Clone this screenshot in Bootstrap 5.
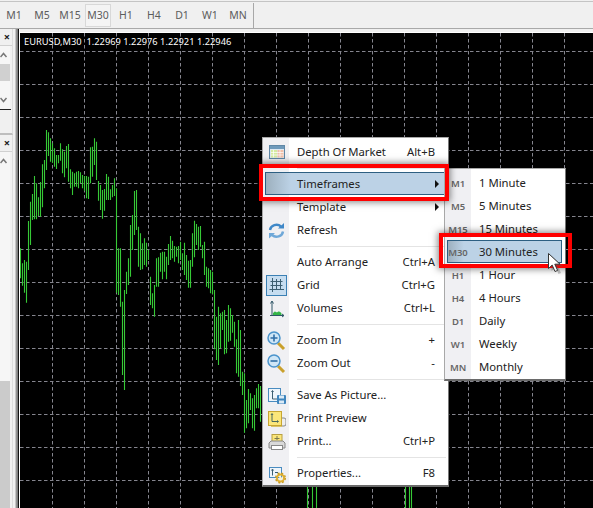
<!DOCTYPE html>
<html lang="en">
<head>
<meta charset="utf-8">
<title>MetaTrader chart timeframes</title>
<link href="https://cdn.jsdelivr.net/npm/bootstrap@5.3.0/dist/css/bootstrap.min.css" rel="stylesheet">
<style>
html,body{margin:0;height:100%;overflow:hidden;background:#f0f0f0}
body{font-family:"Noto Sans","Open Sans",sans-serif;font-size:11.3px;color:#222}
.mt-app{width:593px;height:508px;position:relative;overflow:hidden}
.mt-top{height:28px;background:#f0f0f0;border-top:1px solid #c4c4c4;border-bottom:1px solid #a9a9a9;margin-top:1px;padding-top:2px}
.mt-tf{width:28px;height:23px;padding:0;border:1px solid transparent;border-radius:0;font-size:10.5px;line-height:21px;color:#5c5c5c;background:transparent;text-align:center}
.mt-tf.active{border-color:#d8d8d8;background:#f4f4f4;color:#5c5c5c;width:26px;margin:0 1px}
.mt-tsep{width:1px;height:25px;background:#a8a8a8;margin-left:1px;margin-top:-1px}
.mt-main{height:479px;padding-top:3px}
.mt-side{width:20px;flex:none;margin-top:-3px;background:linear-gradient(to right,#f0f0f0 15px,#9a9a9a 16px,#777 18px,#111 18px,#111 19px,#fff 19px)}
.mt-sect{width:13px;border-right:1px solid #dcdcdc;color:#444}
.mt-s1{height:106px;border-bottom:2px solid #bdbdbd}
.mt-s2{height:373px}
.mt-head{height:17px;font-size:11px;font-weight:700;line-height:16px;text-align:right;padding-right:2px;border-bottom:1px solid #d0d0d0;color:#222}
.mt-scroll{width:10px;background:#f6f6f6}
.mt-s1 .mt-scroll{height:63px}
.mt-s2 .mt-scroll{height:356px}
.mt-chev{height:18px;display:block}
.mt-chev-low{height:10px}
.mt-thumb1{height:17px;background:#d0d0d0}
.mt-gap{height:14px}
.mt-rule{height:1px;width:11px;background:#222}
.mt-thumb2{height:127px;background:#cbcbcb}
.mt-chart{flex:1 1 auto;background:#000;border-top:1px solid #fff;position:relative;overflow:hidden}
.mt-chart svg{display:block}
.mt-cap{position:absolute;left:4px;top:2px;color:#fff;font-size:9.3px;line-height:13px;white-space:pre}
.mt-menu{display:block;position:absolute;border-radius:0;margin:0;padding:3px 0 0;min-width:0;font-size:11.3px;color:#222;border:1px solid #a8a8a8;border-right-color:#777;border-bottom:2px solid #6a6a6a}
.mt-m1{left:262px;top:137px;width:187px;background:linear-gradient(to right,#f0f0f3 26px,#fff 26px);z-index:10}
.mt-m2{left:444px;top:168px;width:122px;background:linear-gradient(to right,#f0f0f3 26px,#fff 26px);z-index:11}
.mt-row{height:23px;padding:0 13px 0 0;color:#222;position:relative;white-space:nowrap;line-height:22px}
.mt-row:hover{background:transparent;color:#222}
.mt-ico{width:26px;flex:none;margin-right:8px;display:flex;align-items:center;justify-content:center;height:23px;position:relative;z-index:1}
.mt-lab{position:relative;z-index:1}
.mt-key{position:relative;z-index:1}
.mt-tag{font-size:9.5px;font-weight:600;color:#666;letter-spacing:-.1px}
.mt-hi::before{content:"";position:absolute;top:-1px;bottom:1px;left:2px;right:3px;background:linear-gradient(to right,#9db0be,#bcd2e6 14%);border:1px solid #2d5f82}
.mt-arrow{width:0;height:0;align-self:center;border-left:4px solid #111;border-top:4px solid transparent;border-bottom:4px solid transparent;margin:-2px -4px 0 0;position:relative;z-index:1}
.mt-sep{height:9px;padding:4px 2px 4px 34px;margin:0}
.mt-sep i{display:block;height:1px;background:#e4e4e4}
.mt-sel{width:21px;height:21px;background:#c6ddf0;border:1px solid #3b80b4;display:flex;align-items:center;justify-content:center}
.mt-red{position:absolute;border:4px solid #f00;box-shadow:0 0 7px 1px rgba(0,0,0,.5);z-index:20;pointer-events:none}
.mt-r1{left:259px;top:164px;width:190px;height:37px}
.mt-r2{left:439px;top:233px;width:133px;height:35px}
.mt-cursor{position:absolute;left:546px;top:251px;z-index:30}
</style>
</head>
<body>
<div class="mt-app">
  <div class="mt-top d-flex">
    <button class="btn mt-tf">M1</button>
    <button class="btn mt-tf">M5</button>
    <button class="btn mt-tf">M15</button>
    <button class="btn mt-tf active">M30</button>
    <button class="btn mt-tf">H1</button>
    <button class="btn mt-tf">H4</button>
    <button class="btn mt-tf">D1</button>
    <button class="btn mt-tf">W1</button>
    <button class="btn mt-tf">MN</button>
    <div class="mt-tsep"></div>
  </div>
  <div class="mt-main d-flex">
    <div class="mt-side">
      <div class="mt-sect mt-s1">
        <div class="mt-head">×</div>
        <div class="mt-scroll">
          <svg class="mt-chev" width="10" height="18" viewBox="0 0 10 18"><path d="M.5 11 3.5 7.5 6.500 11" fill="none" stroke="#777" stroke-width="1.500"/></svg>
          <div class="mt-thumb1"></div>
          <div class="mt-gap"></div>
          <svg class="mt-chev mt-chev-low" width="10" height="10" viewBox="0 0 10 10"><path d="M.5 3 3.500 6.500 6.500 3" fill="none" stroke="#777" stroke-width="1.500"/></svg>
        </div>
        <div class="mt-rule"></div>
      </div>
      <div class="mt-sect mt-s2">
        <div class="mt-head">×</div>
        <div class="mt-scroll d-flex flex-column">
          <svg class="mt-chev flex-shrink-0" width="10" height="18" viewBox="0 0 10 18"><path d="M.5 11 3.500 7.500 6.500 11" fill="none" stroke="#777" stroke-width="1.500"/></svg>
          <div class="flex-grow-1"></div>
          <div class="mt-thumb2 flex-shrink-0"></div>
        </div>
      </div>
    </div>
    <div class="mt-chart">
      <svg width="573" height="475" viewBox="20 33 573 475" xmlns="http://www.w3.org/2000/svg">
        <path id="mtGrid" fill="none" stroke="#85858e" stroke-width="1" stroke-dasharray="3.500 2.500"/>
        <path id="mtBars" fill="none" stroke="#36c936" stroke-width="1.100"/>
      </svg>
      <div class="mt-cap">EURUSD,M30  1.22969 1.22976 1.22921 1.22946</div>
    </div>
  </div>

  <div class="dropdown-menu show mt-menu mt-m1">
    <a class="dropdown-item d-flex mt-row"><span class="mt-ico"><svg width="20" height="20" viewBox="0 0 20 20"><rect x="3.500" y="2.500" width="15" height="13" fill="#dfe9f2" stroke="#5f87a6"/><rect x="4" y="3" width="14" height="3" fill="#6f9abb"/><rect x="5" y="7" width="6" height="7.500" fill="#d6eba0"/><rect x="11.500" y="7" width="6" height="7.500" fill="#f2bfa8"/><path d="M5 9.500h12.500M5 12h12.500M7.500 7v7.500M14 7v7.500" stroke="#fff" stroke-width=".7"/></svg></span><span class="mt-lab flex-grow-1">Depth Of Market</span><span class="mt-key">Alt+B</span></a>
    <div class="mt-sep"><i></i></div>
    <a class="dropdown-item d-flex mt-row mt-hi"><span class="mt-ico"></span><span class="mt-lab flex-grow-1">Timeframes</span><span class="mt-arrow"></span></a>
    <a class="dropdown-item d-flex mt-row"><span class="mt-ico"></span><span class="mt-lab flex-grow-1">Template</span><span class="mt-arrow"></span></a>
    <a class="dropdown-item d-flex mt-row"><span class="mt-ico"><svg width="20" height="20" viewBox="0 0 20 20"><path d="M4 9A6.500 6 0 0 1 15 5.500" fill="none" stroke="#3f88c8" stroke-width="2.400"/><path d="M12 7.500h6V2z" fill="#3f88c8"/><path d="M17 10.500a6.500 6 0 0 1-11 3.500" fill="none" stroke="#6fa8d8" stroke-width="2.400"/><path d="M9 12H3v5.500z" fill="#6fa8d8"/></svg></span><span class="mt-lab flex-grow-1">Refresh</span></a>
    <div class="mt-sep"><i></i></div>
    <a class="dropdown-item d-flex mt-row"><span class="mt-ico"></span><span class="mt-lab flex-grow-1">Auto Arrange</span><span class="mt-key">Ctrl+A</span></a>
    <a class="dropdown-item d-flex mt-row"><span class="mt-ico"><span class="mt-sel"><svg width="17" height="17" viewBox="0 0 17 17"><path d="M4.500 1v14M8.500 2v11M12.500 2v11M1.500 12.500H16M2.500 8.500h12M2.500 4.500h12" fill="none" stroke="#3c5f72" stroke-width="1"/></svg></span></span><span class="mt-lab flex-grow-1">Grid</span><span class="mt-key">Ctrl+G</span></a>
    <a class="dropdown-item d-flex mt-row"><span class="mt-ico"><svg width="20" height="20" viewBox="0 0 20 20"><path d="M7 16v-2c1.500-1.500 2-2 3-1 1 .8 2-.8 3-.500 1 .3 2 1 2.500 2V16z" fill="#35b548"/><path d="M6 2.500v14M4 16.500h14M4.500 4.500 6 2l1.500 2.500M16 15l2 1.500-2 1.500" fill="none" stroke="#2f5566" stroke-width="1"/></svg></span><span class="mt-lab flex-grow-1">Volumes</span><span class="mt-key">Ctrl+L</span></a>
    <div class="mt-sep"><i></i></div>
    <a class="dropdown-item d-flex mt-row"><span class="mt-ico"><svg width="20" height="20" viewBox="0 0 20 20"><path d="M12 12l6 6" stroke="#c9a02c" stroke-width="3"/><circle cx="8" cy="7" r="6" fill="#cfe6f6" stroke="#4b94cc" stroke-width="1.500"/><path d="M4.500 7h7M8 3.500v7" stroke="#2f6ea6" stroke-width="1.600"/></svg></span><span class="mt-lab flex-grow-1">Zoom In</span><span class="mt-key">+</span></a>
    <a class="dropdown-item d-flex mt-row"><span class="mt-ico"><svg width="20" height="20" viewBox="0 0 20 20"><path d="M12 12l6 6" stroke="#c9a02c" stroke-width="3"/><circle cx="8" cy="7" r="6" fill="#cfe6f6" stroke="#4b94cc" stroke-width="1.500"/><path d="M4.500 7h7" stroke="#2f6ea6" stroke-width="1.600"/></svg></span><span class="mt-lab flex-grow-1">Zoom Out</span><span class="mt-key">-</span></a>
    <div class="mt-sep"><i></i></div>
    <a class="dropdown-item d-flex mt-row"><span class="mt-ico"><svg width="20" height="20" viewBox="0 0 20 20"><rect x="2.500" y="2.500" width="12" height="13" fill="#eef5fb" stroke="#4a8cc0"/><path d="M6.500 5v8h5M5.500 6l1-1.500 1 1.500" fill="none" stroke="#3c5f72"/><rect x="11" y="9" width="9" height="9" rx="1" fill="#3f85bd"/><rect x="13" y="9.500" width="5" height="3" fill="#dbeaf6"/><rect x="13" y="14.500" width="5" height="3" fill="#dbeaf6"/></svg></span><span class="mt-lab flex-grow-1">Save As Picture...</span></a>
    <a class="dropdown-item d-flex mt-row"><span class="mt-ico"><svg width="20" height="20" viewBox="0 0 20 20"><rect x="13" y="9" width="7" height="8" rx="2" fill="#eee" stroke="#888"/><rect x="2.500" y="2.500" width="13" height="14" fill="#fbe67a" stroke="#c8a632"/><path d="M5 17.500h11" stroke="#d8c36a"/><path d="M6 5v7.500h6M5 6l1-1.500 1 1.500M11 11.500l1.500 1-1.500 1" fill="none" stroke="#4a6a60"/></svg></span><span class="mt-lab flex-grow-1">Print Preview</span></a>
    <a class="dropdown-item d-flex mt-row"><span class="mt-ico"><svg width="20" height="20" viewBox="0 0 20 20"><rect x="6" y="2.500" width="10" height="7" fill="#fbe67a" stroke="#b8a042"/><path d="M11 4v4M8.500 6.500h5" stroke="#7a7a50"/><path d="M5 9h12l2 2v5H3v-5z" fill="#d9d9d9" stroke="#888"/><rect x="5.500" y="13.500" width="11" height="4" fill="#fff" stroke="#888"/></svg></span><span class="mt-lab flex-grow-1">Print...</span><span class="mt-key">Ctrl+P</span></a>
    <div class="mt-sep"><i></i></div>
    <a class="dropdown-item d-flex mt-row"><span class="mt-ico"><svg width="20" height="20" viewBox="0 0 20 20"><rect x="3.500" y="3.500" width="12" height="10" fill="#eef5fb" stroke="#4a8cc0"/><path d="M6.500 5.500v6M5.500 6.500l1-1.500 1 1.500M9 8.500h3" fill="none" stroke="#3c5f72"/><circle cx="14.500" cy="14" r="3.500" fill="none" stroke="#e0b030" stroke-width="2" /><circle cx="14.500" cy="14" r="4.800" fill="none" stroke="#c99c22" stroke-width="1.400" stroke-dasharray="2 1.800"/><circle cx="14.500" cy="14" r="1.300" fill="#fff3c4"/></svg></span><span class="mt-lab flex-grow-1">Properties...</span><span class="mt-key">F8</span></a>
  </div>

  <div class="dropdown-menu show mt-menu mt-m2">
    <a class="dropdown-item d-flex mt-row"><span class="mt-ico mt-tag">M1</span><span class="mt-lab">1 Minute</span></a>
    <a class="dropdown-item d-flex mt-row"><span class="mt-ico mt-tag">M5</span><span class="mt-lab">5 Minutes</span></a>
    <a class="dropdown-item d-flex mt-row"><span class="mt-ico mt-tag">M15</span><span class="mt-lab">15 Minutes</span></a>
    <a class="dropdown-item d-flex mt-row mt-hi"><span class="mt-ico mt-tag">M30</span><span class="mt-lab">30 Minutes</span></a>
    <a class="dropdown-item d-flex mt-row"><span class="mt-ico mt-tag">H1</span><span class="mt-lab">1 Hour</span></a>
    <a class="dropdown-item d-flex mt-row"><span class="mt-ico mt-tag">H4</span><span class="mt-lab">4 Hours</span></a>
    <a class="dropdown-item d-flex mt-row"><span class="mt-ico mt-tag">D1</span><span class="mt-lab">Daily</span></a>
    <a class="dropdown-item d-flex mt-row"><span class="mt-ico mt-tag">W1</span><span class="mt-lab">Weekly</span></a>
    <a class="dropdown-item d-flex mt-row"><span class="mt-ico mt-tag">MN</span><span class="mt-lab">Monthly</span></a>
  </div>

  <div class="mt-red mt-r1"></div>
  <div class="mt-red mt-r2"></div>
  <svg class="mt-cursor" width="18" height="24" viewBox="0 0 18 24"><path d="M4 4v15l4-3.500 3 6.500 2.500-1-3-6.500h5.500z" fill="#555" opacity=".35" transform="translate(1.500 1)"/><path d="M2.500 2.500v15l3.700-3.400 2.800 6.400 2.600-1.100-2.800-6.200h5.200z" fill="#fff" stroke="#333" stroke-width="1"/></svg>
</div>
<script>
(function(){
  var g='';
  for(var x=52;x<593;x+=32){g+='M'+(x+.5)+' 33V508';}
  for(var y=51;y<508;y+=33){g+='M20 '+(y+.5)+'H593';}
  document.getElementById('mtGrid').setAttribute('d',g);
  /* high/low of each bar, in tripled chart coordinates from y=120 */
  var v=[385,475,430,497,420,518,425,548,303,450,245,375,222,300,168,298,190,298,232,288,186,290,133,262,120,205,30,150,37,108,55,125,70,128,85,140,105,147,105,130,70,122,88,160,95,172,78,145,72,185,148,205,155,225,160,200,155,200,153,205,157,190,165,205,168,212,168,235,170,237,82,190,80,170,55,135,65,180,183,242,195,270,210,296,207,272,162,240,170,240,208,240,195,232,175,228,205,518,385,525,385,560,545,765,510,810,455,522,415,495,315,470,285,390,213,345,210,330,320,440,340,450,370,448,355,435,368,440,390,420,470,555,520,565,495,590,415,500,412,500,398,455,395,478,395,455,410,478,372,435,348,420,362,415,378,425,380,410,378,430,365,420,400,450,368,465,405,480,422,503,420,503,340,440,302,412,312,375,320,390,318,380,375,415,365,465,440,500,445,505,450,520,455,522,510,688,590,720,560,735,580,685,575,630,570,703,600,700,555,665,565,662,585,638,605,680,658,760,600,770,630,798,755,825,760,938,840,925,807,910,820,870,835,925,825,932,805,865,792,865,798,905];
  var d='';
  for(var i=0;i<v.length;i+=2){
    var x=20.5+i;
    d+='M'+x+' '+(120+v[i]/3).toFixed(1)+'V'+(120+v[i+1]/3).toFixed(1);
  }
  [307,312,316,405,409,411].forEach(function(x){d+='M'+(x+.5)+' 480V508';});
  document.getElementById('mtBars').setAttribute('d',d);
})();
</script>
<script src="https://cdn.jsdelivr.net/npm/bootstrap@5.3.0/dist/js/bootstrap.bundle.min.js"></script>
</body>
</html>
